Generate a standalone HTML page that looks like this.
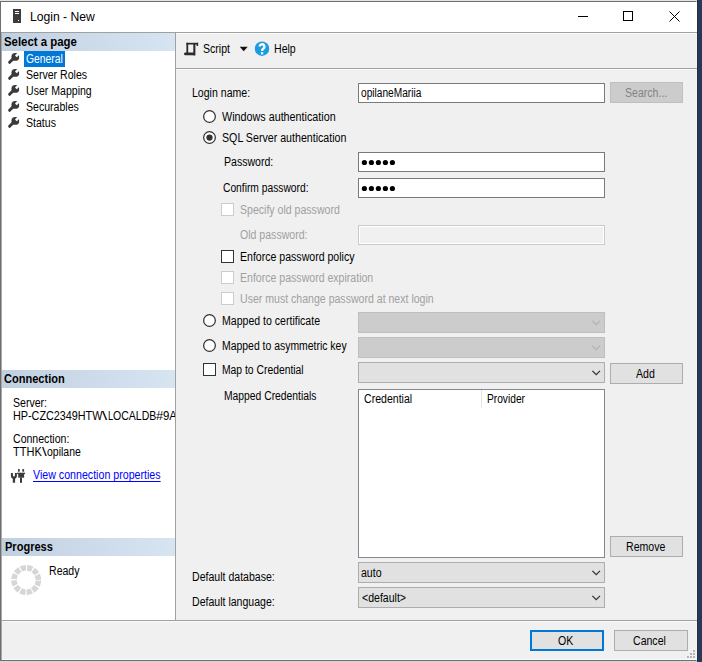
<!DOCTYPE html>
<html>
<head>
<meta charset="utf-8">
<title>Login - New</title>
<style>
html,body{margin:0;padding:0;}
body{width:702px;height:662px;position:relative;overflow:hidden;background:#ffffff;font-family:"Liberation Sans",sans-serif;font-size:12px;color:#000;}
.abs{position:absolute;}
.t{position:absolute;white-space:nowrap;line-height:14px;height:14px;transform-origin:0 50%;transform:scaleX(0.88);}
.g{color:#a0a0a0;}
.b{font-weight:bold;}
.hdr{position:absolute;left:1px;width:174px;height:18px;background:linear-gradient(to right,#c1d0e1,#d7e4f2);}
.inp{position:absolute;left:358px;width:245px;height:18px;background:#fff;border:1px solid #7a7a7a;}
.cmb{position:absolute;left:358px;width:245px;height:19px;border:1px solid #adadad;background:#e1e1e1;}
.cmb.dis{background:#cccccc;border-color:#bfbfbf;}
.btn{position:absolute;height:19px;border:1px solid #adadad;background:#e1e1e1;}
.radio{position:absolute;width:11px;height:11px;border:1px solid #333;border-radius:50%;background:#fff;}
.chk{position:absolute;width:11px;height:11px;border:1px solid #333;background:#fff;}
.chk.dis{border-color:#cccccc;background:#fff;}
</style>
</head>
<body>
<!-- desktop background bits -->
<div class="abs" style="left:0;top:0;width:702px;height:1px;background:#e4e4e4;"></div>
<div class="abs" style="left:697px;top:0;width:5px;height:662px;background:#293857;border-left:1px solid #222e46;box-sizing:border-box;"></div>
<!-- window -->
<div class="abs" id="win" style="left:0;top:1px;width:697px;height:660px;background:#f0f0f0;box-sizing:border-box;border:1px solid #6e6e6e;border-right-color:#f4f4f4;"></div>
<!-- title bar -->
<div class="abs" style="left:1px;top:2px;width:696px;height:30px;background:#fff;"></div>
<div class="abs" style="left:1px;top:32px;width:696px;height:1px;background:#a0a0a0;"></div>
<svg class="abs" style="left:12px;top:9px;" width="10" height="15" viewBox="0 0 10 15"><rect x="1" y="0" width="8" height="14" fill="#3c3c3c"/><rect x="3" y="2" width="4" height="1" fill="#fff"/><rect x="3" y="4" width="4" height="1" fill="#fff"/><rect x="6" y="11" width="1" height="1" fill="#fff"/></svg>
<div class="t" style="left:30px;top:10px;font-size:13px;transform:scaleX(0.935);">Login - New</div>
<svg class="abs" style="left:570px;top:6px;" width="120" height="22" viewBox="0 0 120 22" fill="none" stroke="#000" stroke-width="1">
<path d="M8 10.5H18"/><rect x="53.5" y="5.5" width="9" height="9"/><path d="M99.5 5.5L109.5 15.5M109.5 5.5L99.5 15.5"/></svg>

<!-- left panel -->
<div class="abs" style="left:1px;top:33px;width:1px;height:627px;background:#a8a8ae;z-index:5;"></div>
<div class="abs" style="left:1px;top:33px;width:174px;height:587px;background:#fff;"></div>
<div class="abs" style="left:175px;top:33px;width:1px;height:587px;background:#a0a0a0;"></div>
<div class="hdr" style="top:33px;"></div>
<div class="t b" style="left:4px;top:35px;transform:scaleX(0.95);">Select a page</div>
<div class="abs" style="left:24px;top:51px;width:41px;height:16px;background:#0078d7;"></div>
<div class="t" style="left:26px;top:52px;color:#fff;transform:scaleX(0.86);">General</div>
<div class="t" style="left:26px;top:68px;">Server Roles</div>
<div class="t" style="left:26px;top:84px;">User Mapping</div>
<div class="t" style="left:26px;top:100px;">Securables</div>
<div class="t" style="left:26px;top:116px;">Status</div>
<svg class="abs" style="left:7px;top:52px;" width="14" height="80" viewBox="0 0 14 80">
<g id="wr"><path d="M2.600 10.300L7.200 5.700" stroke="#3b3b3b" stroke-width="3" stroke-linecap="round" fill="none"/><circle cx="8.300" cy="4.900" r="3.900" fill="#3b3b3b"/><path d="M8.900 4.300L13.500 -0.300" stroke="#fff" stroke-width="2.600" fill="none"/></g>
<use href="#wr" y="16"/><use href="#wr" y="32"/><use href="#wr" y="48"/><use href="#wr" y="64"/></svg>

<div class="hdr" style="top:370px;"></div>
<div class="t b" style="left:4px;top:372px;transform:scaleX(0.92);">Connection</div>
<div class="t" style="left:13px;top:396px;">Server:</div>
<div class="abs" style="left:13px;top:408px;width:162px;height:16px;overflow:hidden;"><div class="t" style="left:-0.500px;top:1px;transform:scaleX(0.9);">HP-CZC2349HTW</div><div class="t" style="left:89px;top:1px;transform:scaleX(1.550);">\</div><div class="t" style="left:94.500px;top:1px;transform:scaleX(0.77);">L</div><div class="t" style="left:99.500px;top:1px;transform:scaleX(0.877);">OCALDB</div><div class="t" style="left:143px;top:1px;transform:scaleX(1.07);">#</div><div class="t" style="left:149.900px;top:1px;transform:scaleX(0.95);">9A</div></div>
<div class="t" style="left:13px;top:432px;">Connection:</div>
<div class="t" style="left:12.900px;top:445px;transform:scaleX(0.919);">TTHK</div><div class="t" style="left:42.100px;top:445px;transform:scaleX(1.400);">\</div><div class="t" style="left:47px;top:445px;transform:scaleX(0.873);">opilane</div>
<div class="t" style="left:33px;top:468px;color:#0000ff;text-decoration:underline;text-decoration-skip-ink:none;text-underline-offset:1.500px;transform:scaleX(0.887);">View connection properties</div>
<svg class="abs" style="left:10px;top:468px;" width="16" height="16" viewBox="0 0 16 16" fill="#3a3a3a"><path d="M0.900 5.100h2v2.300a1 1 0 0 0 2 0v-2.300h2v3a2.900 2.900 0 0 1-1.800 2.700v4h-2.300v-4a2.900 2.900 0 0 1-1.900-2.700z"/><rect x="8" y="1.100" width="1.700" height="2.600"/><rect x="12.300" y="1.100" width="1.800" height="2.600"/><rect x="7.100" y="4.700" width="8" height="1.400"/><rect x="8.200" y="6" width="5.900" height="3.700"/><rect x="10" y="9.600" width="2" height="5.200"/></svg>

<div class="hdr" style="top:538px;"></div>
<div class="t b" style="left:5px;top:540px;transform:scaleX(0.92);">Progress</div>
<svg class="abs" style="left:10px;top:564px;" width="32" height="32" viewBox="0 0 32 32" fill="none" stroke="#d6d6d6" stroke-width="5.600" stroke-dasharray="5.150 1.238" stroke-dashoffset="-0.620"><circle cx="16.200" cy="16" r="12.200"/></svg>
<div class="t" style="left:49px;top:564px;">Ready</div>

<!-- toolbar -->
<div class="abs" style="left:176px;top:33px;width:520px;height:1px;background:#fbfbfb;"></div>
<div class="abs" style="left:176px;top:69px;width:520px;height:1px;background:#fbfbfb;"></div>
<div class="abs" style="left:2px;top:621px;width:694px;height:1px;background:#fafafa;"></div>
<div class="abs" style="left:176px;top:68px;width:521px;height:1px;background:#a0a0a0;"></div>
<svg class="abs" style="left:184px;top:41.500px;" width="15" height="15" viewBox="0 0 15 15" fill="#2b2b2b"><rect x="2.400" y="0.800" width="11.700" height="1.700"/><rect x="12.600" y="0.800" width="1.500" height="3.200"/><rect x="2.400" y="0.800" width="1.800" height="10.500"/><rect x="9.300" y="2" width="2.100" height="11.600" rx="0.600"/><rect x="0.100" y="10.400" width="10.500" height="2.800" rx="1.200"/></svg>
<div class="t" style="left:203px;top:42px;">Script</div>
<svg class="abs" style="left:239px;top:46px;" width="10" height="6" viewBox="0 0 10 6"><path d="M0.700 0.800H8.700L4.700 5.300z" fill="#111"/></svg>
<svg class="abs" style="left:254px;top:41px;" width="16" height="16" viewBox="0 0 16 16"><circle cx="8" cy="7.700" r="7.200" fill="#1c9be0"/><path d="M5.700 5.500a2.350 2.350 0 1 1 3.400 2.200c-0.800 0.450-1 0.900-1 2.200" fill="none" stroke="#fff" stroke-width="2.300"/><rect x="6.950" y="11.200" width="2.300" height="2.200" fill="#fff"/></svg>
<div class="t" style="left:274px;top:42px;">Help</div>

<!-- form -->
<div class="t" style="left:192px;top:86px;">Login name:</div>
<div class="inp" style="top:83px;"></div>
<div class="t" style="left:361px;top:86px;transform:scaleX(0.845);">opilaneMariia</div>
<div class="btn" style="left:610px;top:82px;width:71px;background:#cccccc;border-color:#bfbfbf;"></div>
<div class="t g" style="left:625px;top:86px;color:#838383;">Search...</div>

<svg class="abs" style="left:203px;top:110px;" width="13" height="13" viewBox="0 0 13 13"><circle cx="6.500" cy="6.500" r="5.850" fill="#fff" stroke="#333" stroke-width="1.250"/></svg>
<div class="t" style="left:222px;top:110px;transform:scaleX(0.897);">Windows authentication</div>
<svg class="abs" style="left:203px;top:131px;" width="13" height="13" viewBox="0 0 13 13"><circle cx="6.500" cy="6.500" r="5.850" fill="#fff" stroke="#333" stroke-width="1.250"/></svg>
<svg class="abs" style="left:203px;top:131px;" width="13" height="13" viewBox="0 0 13 13"><circle cx="6.500" cy="6.600" r="3.150" fill="#333"/></svg>
<div class="t" style="left:222px;top:131px;transform:scaleX(0.887);">SQL Server authentication</div>

<div class="t" style="left:224px;top:155px;">Password:</div>
<div class="inp" style="top:152px;"></div>
<svg class="abs" style="left:361px;top:159px;" width="40" height="7" viewBox="0 0 40 7" fill="#000"><circle cx="3.4" cy="3.5" r="2.6"/><circle cx="10.4" cy="3.5" r="2.6"/><circle cx="17.4" cy="3.5" r="2.6"/><circle cx="24.4" cy="3.5" r="2.6"/><circle cx="31.4" cy="3.5" r="2.6"/></svg>
<div class="t" style="left:223px;top:181px;transform:scaleX(0.855);">Confirm password:</div>
<div class="inp" style="top:178px;"></div>
<svg class="abs" style="left:361px;top:185px;" width="40" height="7" viewBox="0 0 40 7" fill="#000"><circle cx="3.4" cy="3.5" r="2.6"/><circle cx="10.4" cy="3.5" r="2.6"/><circle cx="17.4" cy="3.5" r="2.6"/><circle cx="24.4" cy="3.5" r="2.6"/><circle cx="31.4" cy="3.5" r="2.6"/></svg>

<div class="chk dis" style="left:221px;top:203px;"></div>
<div class="t g" style="left:240px;top:203px;">Specify old password</div>
<div class="t g" style="left:240px;top:228px;">Old password:</div>
<div class="inp" style="top:225px;background:#f0f0f0;border-color:#cacaca;box-shadow:inset 0 0 0 1px #ffffff;"></div>

<div class="chk" style="left:221px;top:250px;"></div>
<div class="t" style="left:240px;top:250px;">Enforce password policy</div>
<div class="chk dis" style="left:221px;top:271px;"></div>
<div class="t g" style="left:240px;top:271px;">Enforce password expiration</div>
<div class="chk dis" style="left:221px;top:292px;"></div>
<div class="t g" style="left:240px;top:292px;">User must change password at next login</div>

<svg class="abs" style="left:203px;top:314px;" width="13" height="13" viewBox="0 0 13 13"><circle cx="6.500" cy="6.500" r="5.850" fill="#fff" stroke="#333" stroke-width="1.250"/></svg>
<div class="t" style="left:222px;top:314px;">Mapped to certificate</div>
<div class="cmb dis" style="top:312px;"></div>
<svg class="abs" style="left:203px;top:339px;" width="13" height="13" viewBox="0 0 13 13"><circle cx="6.500" cy="6.500" r="5.850" fill="#fff" stroke="#333" stroke-width="1.250"/></svg>
<div class="t" style="left:222px;top:339px;transform:scaleX(0.869);">Mapped to asymmetric key</div>
<div class="cmb dis" style="top:337px;"></div>
<div class="chk" style="left:203px;top:363px;"></div>
<div class="t" style="left:222px;top:363px;transform:scaleX(0.862);">Map to Credential</div>
<div class="cmb" style="top:362px;"></div>
<div class="btn" style="left:610px;top:363px;width:71px;"></div>
<div class="t" style="left:636px;top:367px;">Add</div>

<div class="t" style="left:224px;top:389px;transform:scaleX(0.861);">Mapped Credentials</div>
<div class="abs" style="left:358px;top:389px;width:245px;height:167px;background:#fff;border:1px solid #828790;"></div>
<div class="t" style="left:364px;top:392px;">Credential</div>
<div class="abs" style="left:481px;top:390px;width:1px;height:18px;background:#e5e5e5;"></div>
<div class="t" style="left:487px;top:392px;transform:scaleX(0.85);">Provider</div>
<div class="btn" style="left:610px;top:536px;width:71px;"></div>
<div class="t" style="left:626px;top:540px;">Remove</div>

<div class="t" style="left:192px;top:570px;">Default database:</div>
<div class="cmb" style="top:562px;"></div>
<div class="t" style="left:361px;top:566px;">auto</div>
<div class="t" style="left:192px;top:595px;">Default language:</div>
<div class="cmb" style="top:587px;"></div>
<div class="t" style="left:362px;top:591px;">&lt;default&gt;</div>

<!-- combo arrows -->
<svg class="abs" style="left:0;top:0;" width="702" height="662" viewBox="0 0 702 662" fill="none"><path d="M592.400 320.9L596.200 324.7L600 320.9" stroke="#b0b0b0" stroke-width="1.1"/><path d="M592.400 345.9L596.200 349.7L600 345.9" stroke="#b0b0b0" stroke-width="1.1"/><path d="M592.400 370.9L596.200 374.7L600 370.9" stroke="#333" stroke-width="1.3"/><path d="M592.400 570.9L596.200 574.7L600 570.9" stroke="#333" stroke-width="1.3"/><path d="M592.400 595.9L596.200 599.7L600 595.9" stroke="#333" stroke-width="1.3"/></svg>

<!-- bottom -->
<div class="abs" style="left:2px;top:659px;width:694px;height:1px;background:#fafafa;"></div>
<div class="abs" style="left:0;top:661px;width:697px;height:1px;background:#d8d8d8;"></div>
<div class="abs" style="left:1px;top:620px;width:696px;height:1px;background:#a0a0a0;"></div>
<div class="btn" style="left:530px;top:630px;width:70px;height:17px;border:2px solid #0078d7;"></div>
<div class="t" style="left:558px;top:634px;">OK</div>
<div class="btn" style="left:614px;top:630px;width:72px;"></div>
<div class="t" style="left:633px;top:634px;">Cancel</div>
<svg class="abs" style="left:687px;top:650px;" width="10" height="10" viewBox="0 0 10 10" fill="#b4b4b4"><rect x="6" y="0" width="2" height="2"/><rect x="3" y="3" width="2" height="2"/><rect x="6" y="3" width="2" height="2"/><rect x="0" y="6" width="2" height="2"/><rect x="3" y="6" width="2" height="2"/><rect x="6" y="6" width="2" height="2"/></svg>
</body>
</html>
